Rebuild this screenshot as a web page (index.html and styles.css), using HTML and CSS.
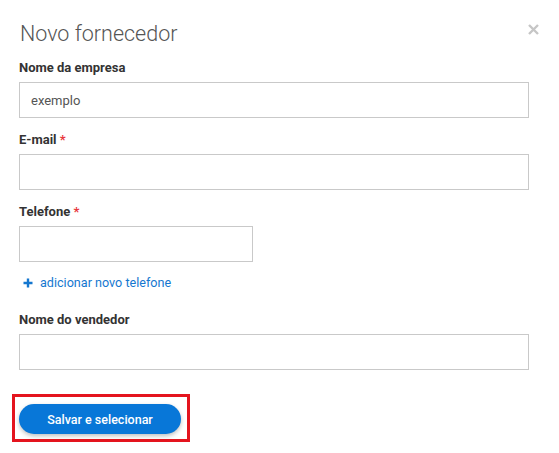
FILE: index.html
```html
<!DOCTYPE html>
<html lang="pt">
<head>
<meta charset="utf-8">
<link rel="stylesheet" href="styles.css">
</head>
<body>
<div class="modal">
  <button class="close" aria-label="Fechar">
    <svg width="11" height="11" viewBox="0 0 11 11"><path d="M1 1L10 10M10 1L1 10" stroke="#c6c6c6" stroke-width="2.4" stroke-linecap="butt"/></svg>
  </button>
  <h1 class="title">Novo fornecedor</h1>
  <div class="field">
    <label class="label">Nome da empresa</label>
    <input class="input" type="text" value="exemplo">
  </div>
  <div class="field">
    <label class="label">E-mail <span class="req">*</span></label>
    <input class="input" type="text">
  </div>
  <div class="field field-phone">
    <label class="label">Telefone <span class="req">*</span></label>
    <input class="input input-short" type="text">
  </div>
  <a class="add-link" href="#">
    <svg width="10" height="10" viewBox="0 0 10 10"><path d="M5 0.5V9.5M0.5 5H9.5" stroke="#1577cf" stroke-width="2.4"/></svg>
    <span>adicionar novo telefone</span>
  </a>
  <div class="field">
    <label class="label">Nome do vendedor</label>
    <input class="input" type="text">
  </div>
  <div class="highlight">
    <button class="btn-primary">Salvar e selecionar</button>
  </div>
</div>
</body>
</html>
```
FILE: styles.css
```css
html, body {
  margin: 0;
  padding: 0;
  background: #fff;
}
body {
  font-family: Roboto, "Liberation Sans", Arial, sans-serif;
  color: #333;
}
.modal {
  position: relative;
  width: 510px;
  padding: 21px 30px 0 19px;
}
.close {
  position: absolute;
  top: 23px;
  right: 20px;
  width: 12px;
  height: 12px;
  padding: 0;
  border: 0;
  background: none;
  display: flex;
  align-items: center;
  justify-content: center;
}
.title {
  margin: 0 0 14px 1px;
  font-size: 21.5px;
  line-height: 25px;
  font-weight: 300;
  color: #555;
}
.field {
  display: flex;
  flex-direction: column;
  margin-bottom: 14px;
}
.label {
  font-size: 13px;
  line-height: 16px;
  font-weight: 700;
  color: #333;
  margin-bottom: 6px;
}
.req {
  color: #e8383d;
}
.input {
  box-sizing: border-box;
  width: 510px;
  height: 36px;
  margin: 0;
  border: 1px solid #c9c9c9;
  border-radius: 0;
  padding: 0 11px;
  font-family: Roboto, "Liberation Sans", Arial, sans-serif;
  font-size: 13px;
  color: #555;
  outline: none;
}
.input-short {
  width: 234px;
}
.field-phone {
  margin-bottom: 13px;
}
.add-link {
  display: flex;
  align-items: center;
  gap: 7px;
  margin-left: 4px;
  height: 16px;
  font-size: 12.6px;
  line-height: 16px;
  color: #1577cf;
  text-decoration: none;
  margin-bottom: 21px;
}
.highlight {
  display: inline-block;
  margin: 10px 0 0 -7px;
  border: 3px solid #e4141e;
  padding: 7px 6px 5px 4px;
}
.btn-primary {
  display: block;
  width: 162px;
  height: 30px;
  border: 0;
  border-radius: 15px;
  background: #0877d8;
  color: #fff;
  font-family: Roboto, "Liberation Sans", Arial, sans-serif;
  font-size: 12.5px;
  font-weight: 500;
  box-shadow: 0 2px 4px rgba(0, 0, 0, 0.25);
}
```
